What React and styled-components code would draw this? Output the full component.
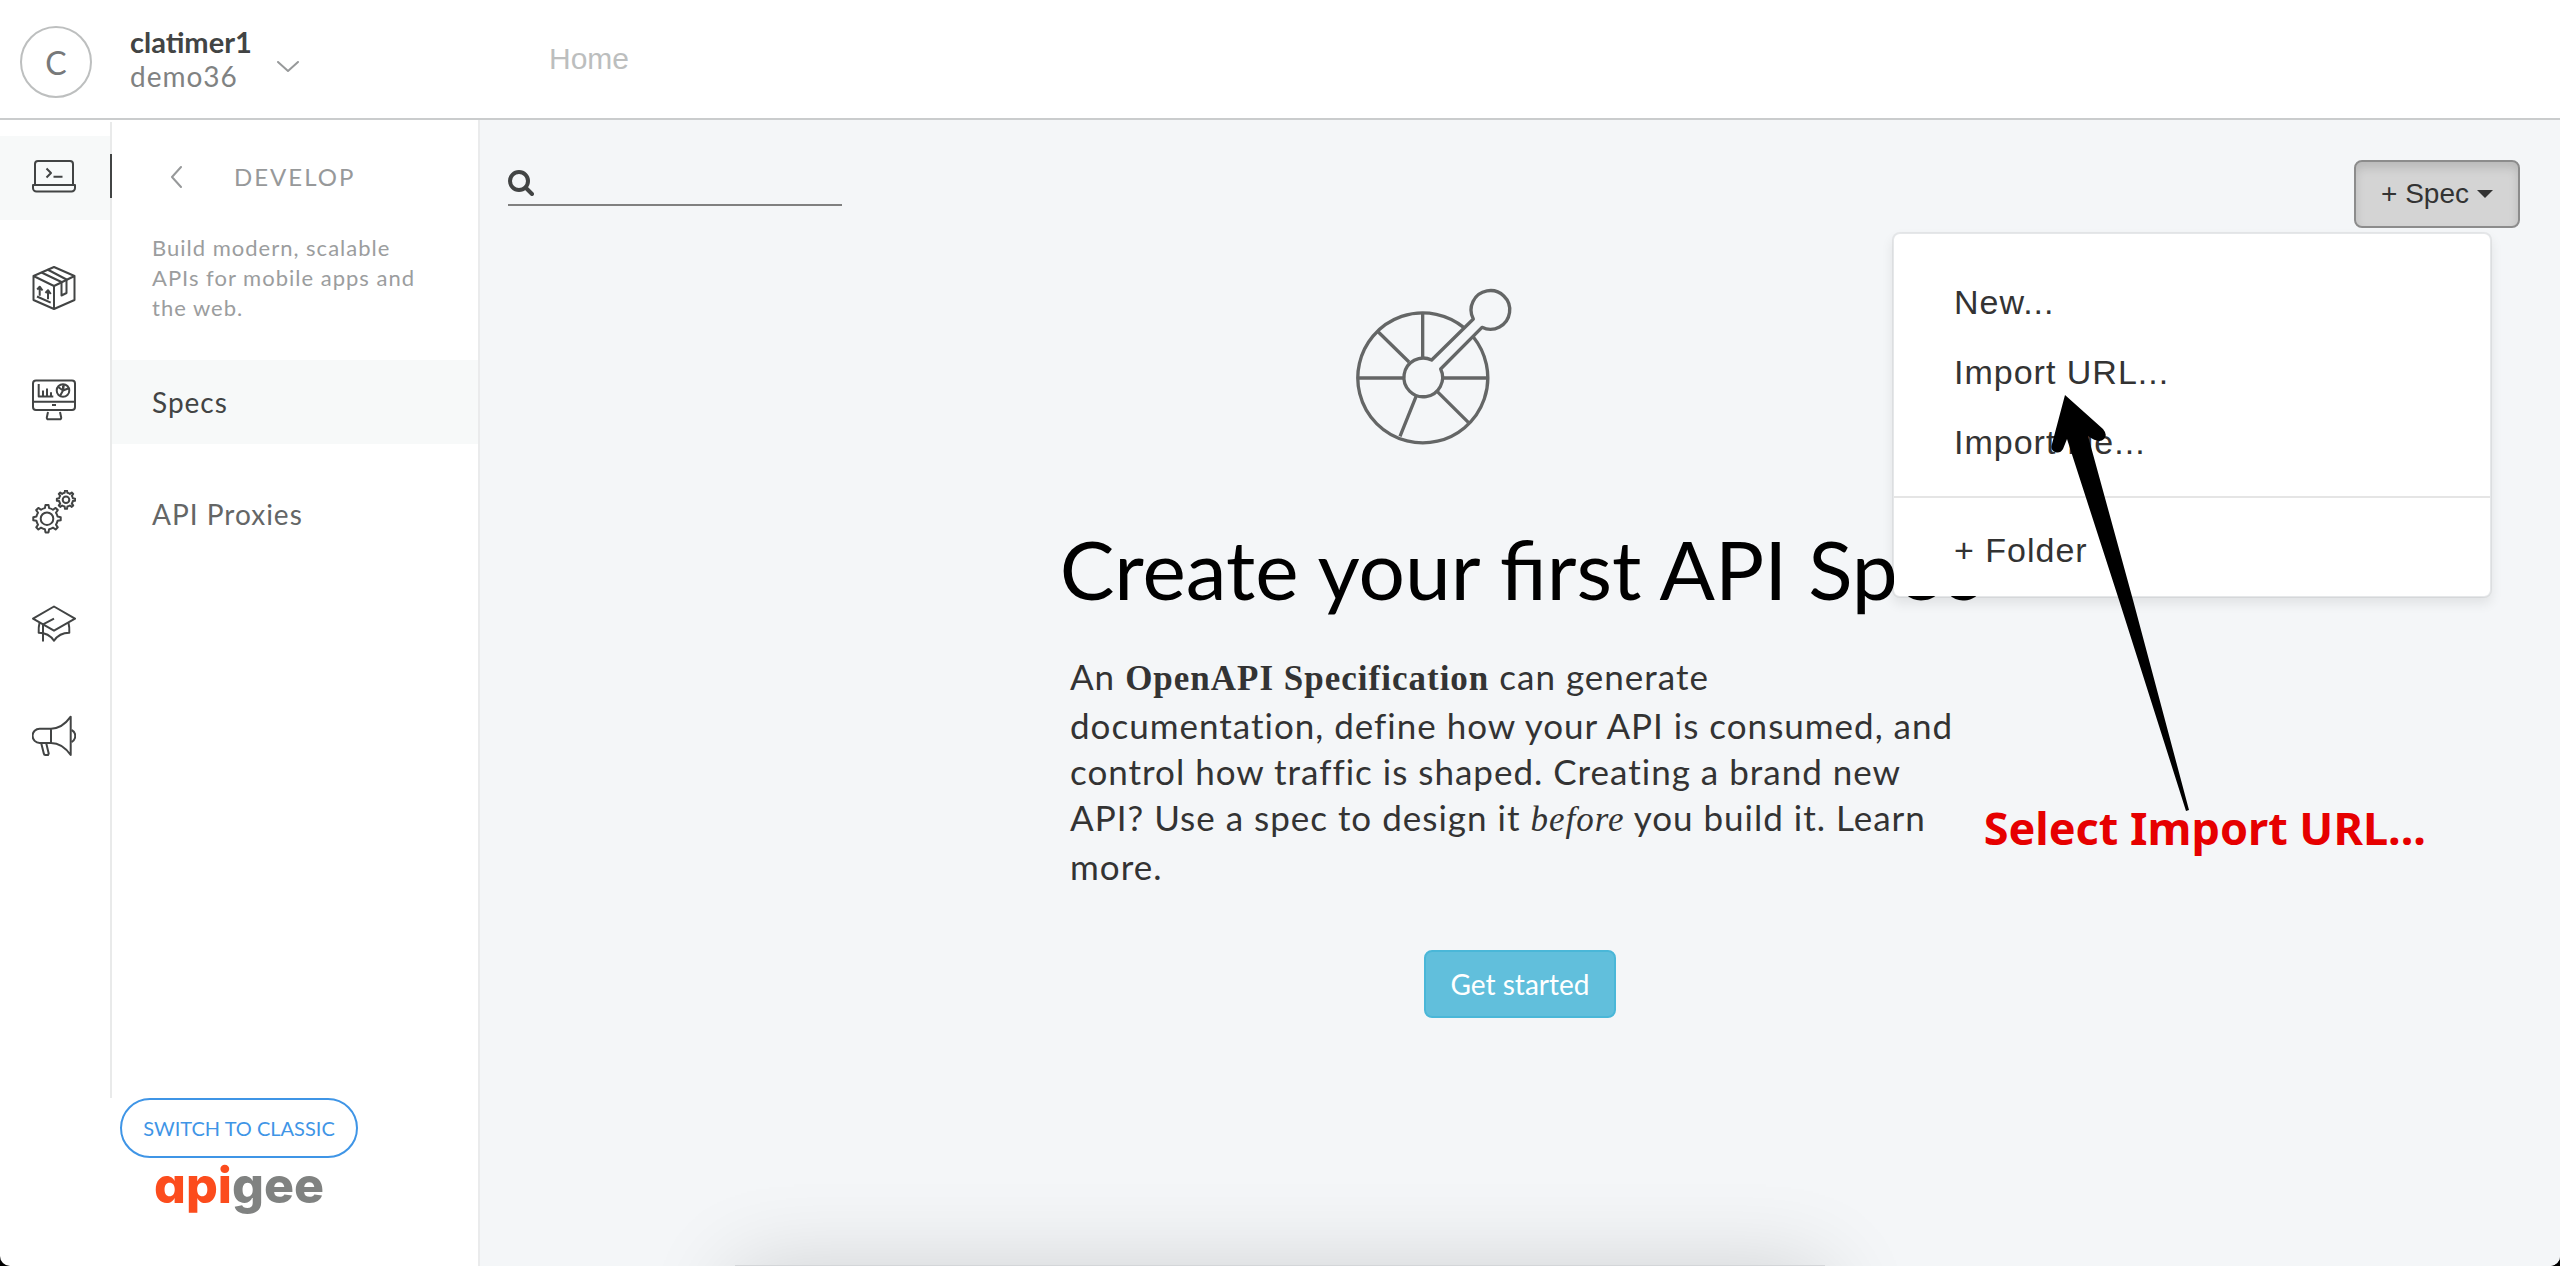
import React from "react";
import styled, { createGlobalStyle } from "styled-components";

const lato = '"Lato", "Open Sans", sans-serif';
const helvetica = '"Liberation Sans", Arial, sans-serif';
const times = '"Liberation Serif", "Times New Roman", serif';

const GlobalStyle = createGlobalStyle`
  *, *::before, *::after { box-sizing: border-box; }
  html, body { margin: 0; padding: 0; }
  body { background: #000; font-family: ${lato}; color: #333; }
  button, input { font: inherit; color: inherit; }
  h1, p, ul { margin: 0; padding: 0; }
  a { color: inherit; text-decoration: none; }
`;

const Page = styled.div`
  position: relative;
  display: flex;
  flex-direction: column;
  min-height: 100vh;
  background: #fff;
  border-radius: 0 0 10px 10px;
  overflow: hidden;
`;

const Header = styled.header`
  display: flex;
  align-items: center;
  height: 120px;
  border-bottom: 2px solid #cacccd;
`;

const Account = styled.button`
  display: flex;
  align-items: center;
  width: 480px;
  height: 100%;
  padding: 6px 20px 0;
  border: 0;
  background: none;
  text-align: left;
`;

const Avatar = styled.span`
  display: flex;
  align-items: center;
  justify-content: center;
  width: 72px;
  height: 72px;
  border: 2px solid #bdbfbf;
  border-radius: 50%;
  color: #77797a;
  font-size: 32px;
`;

const AccountNames = styled.span`
  display: flex;
  flex-direction: column;
  padding: 0 25px 6px 38px;
  font-size: 28px;
  line-height: 34px;
`;

const UserName = styled.strong`
  color: #424444;
  font-size: 29px;
  font-weight: 700;
`;

const OrgName = styled.span`
  color: #808282;
  letter-spacing: 1px;
`;

const Crumb = styled.a`
  padding-left: 69px;
  color: #bcbebe;
  font-family: ${helvetica};
  font-size: 30px;
`;

const Body = styled.div`
  display: flex;
  flex: 1;
`;

const Sidebar = styled.aside`
  display: flex;
  flex-direction: column;
  width: 480px;
  border-right: 2px solid #eaebec;
`;

const SidebarTop = styled.div`
  display: flex;
  flex: 1;
  padding-top: 2px;
`;

const Rail = styled.nav`
  display: flex;
  flex-direction: column;
  gap: 28px;
  width: 112px;
  padding-top: 14px;
  border-right: 2px solid #e9eaea;
`;

const RailLink = styled.a`
  position: relative;
  display: flex;
  justify-content: center;
  height: 84px;
  padding-top: 18px;
  padding-right: 2px;
  background: ${(p) => (p.$active ? "#f7f9f9" : "transparent")};

  &::after {
    content: "";
    display: ${(p) => (p.$active ? "block" : "none")};
    position: absolute;
    top: 18px;
    right: -2px;
    width: 2px;
    height: 44px;
    background: #424444;
  }
`;

const RailIcon = styled.svg`
  width: 44px;
  height: 44px;
  fill: none;
  stroke: #424444;
  stroke-width: 2;
  stroke-linejoin: round;
`;

const Panel = styled.section`
  flex: 1;
`;

const PanelHead = styled.div`
  display: flex;
  align-items: center;
  gap: 52px;
  padding: 37px 58px 0;
  color: #97999a;
  font-size: 24px;
  line-height: 36px;
  letter-spacing: 2px;
`;

const BackButton = styled.button`
  display: flex;
  padding: 0;
  border: 0;
  background: none;
`;

const Chevron = styled.svg`
  fill: none;
  stroke: #97999a;
  stroke-width: 2;
  stroke-linecap: round;
  stroke-linejoin: round;
`;

const AccountChevron = styled(Chevron)`
  margin-top: 10px;
`;

const PanelText = styled.p`
  padding: 38px 40px 37px;
  color: #9b9d9e;
  font-size: 22px;
  line-height: 30px;
  letter-spacing: 1px;
`;

const PanelList = styled.ul`
  display: flex;
  flex-direction: column;
  gap: 28px;
  list-style: none;
`;

const PanelLink = styled.a`
  display: flex;
  align-items: center;
  height: 84px;
  padding: 0 40px;
  background: ${(p) => (p.$active ? "#f7f9f9" : "transparent")};
  color: ${(p) => (p.$active ? "#424444" : "#646666")};
  font-size: 28px;
  letter-spacing: 1px;
`;

const SidebarFoot = styled.footer`
  display: flex;
  flex-direction: column;
  align-items: center;
  height: 168px;
`;

const SwitchButton = styled.button`
  height: 60px;
  padding: 0 21px;
  border: 2px solid #3f95e6;
  border-radius: 30px;
  background: #fff;
  color: #3f95e6;
  font-size: 20px;
`;

const Logo = styled.div`
  color: #808281;
  font-family: "Inter", sans-serif;
  font-feature-settings: "cv11";
  font-size: 50px;
  font-weight: 800;
  line-height: 54px;
`;

const LogoAccent = styled.span`
  color: #fc4c1d;
`;

const Main = styled.main`
  flex: 1;
  background: #f4f6f8;
`;

const Toolbar = styled.div`
  display: flex;
  align-items: flex-start;
  justify-content: space-between;
  padding: 40px 40px 0 28px;
`;

const Search = styled.label`
  display: flex;
  align-items: center;
  gap: 10px;
  width: 334px;
  height: 46px;
  padding-top: 2px;
  border-bottom: 2px solid #808080;
`;

const SearchInput = styled.input`
  flex: 1;
  min-width: 0;
  border: 0;
  outline: 0;
  background: none;
  font-size: 24px;
`;

const Dropdown = styled.div`
  position: relative;
`;

const SpecButton = styled.button`
  display: flex;
  align-items: center;
  gap: 8px;
  height: 68px;
  padding: 0 25px;
  border: 2px solid #8c8c8c;
  border-radius: 8px;
  background: #d4d4d4;
  box-shadow: inset 0 6px 10px rgba(0, 0, 0, 0.125);
  font-family: ${helvetica};
  font-size: 28px;
`;

const Menu = styled.div`
  position: absolute;
  z-index: 2;
  top: 72px;
  right: 28px;
  width: 600px;
  border: 2px solid rgba(0, 0, 0, 0.06);
  border-radius: 8px;
  background: #fff;
  background-clip: padding-box;
  box-shadow: 0 6px 12px rgba(0, 0, 0, 0.08);
`;

const MenuGroup = styled.div`
  display: flex;
  flex-direction: column;
  padding: ${(p) => (p.$last ? "17px 0 11px" : "33px 0 19px")};
  border-bottom: ${(p) => (p.$last ? "0" : "2px solid #e5e5e5")};
`;

const MenuItem = styled.button`
  height: 70px;
  padding: 0 60px;
  border: 0;
  background: none;
  font-family: ${helvetica};
  font-size: 34px;
  letter-spacing: 1px;
  text-align: left;
`;

const Empty = styled.section`
  display: flex;
  flex-direction: column;
  align-items: center;
  padding-top: 58px;
`;

const Wheel = styled.svg`
  width: 160px;
  height: 160px;
  margin-right: 172px;
  fill: none;
  stroke: #646666;
  stroke-width: 10;
  stroke-linejoin: round;
`;

const Title = styled.h1`
  padding-top: 74px;
  color: #000;
  font-size: 82px;
  font-weight: 400;
  line-height: 96px;
`;

const Lead = styled.p`
  width: 900px;
  padding: 37px 10px 0 0;
  font-size: 35px;
  line-height: 46px;
  letter-spacing: 1px;

  strong, em { font-family: ${times}; }
`;

const StartButton = styled.button`
  height: 68px;
  margin-top: 61px;
  padding: 0 25px;
  border: 2px solid #4ab7d8;
  border-radius: 8px;
  background: #61bfdc;
  color: #fff;
  font-size: 28px;
`;

const Callout = styled.div`
  position: absolute;
  z-index: 3;
  top: 394px;
  right: 134px;
  display: flex;
  flex-direction: column;
  pointer-events: none;
`;

const CalloutArrow = styled.svg`
  width: 140px;
  height: 418px;
  margin-left: 66px;
`;

const CalloutText = styled.span`
  height: 60px;
  margin-top: -14px;
  color: #e60000;
  font-family: "Noto Sans", sans-serif;
  font-size: 45px;
  font-weight: 700;
  line-height: 60px;
`;

const DockShadow = styled.div`
  position: absolute;
  z-index: 1;
  right: 0;
  bottom: 0;
  left: 0;
  height: 110px;
  overflow: hidden;
  pointer-events: none;

  &::after {
    content: "";
    display: block;
    width: 1090px;
    height: 300px;
    margin: 109px auto 0;
    background: #d4d6d9;
    box-shadow: 0 4px 84px rgba(0, 0, 0, 0.16);
  }
`;

const polar = (cx, cy, r, a) =>
  `${(cx + r * Math.cos(a)).toFixed(2)} ${(cy + r * Math.sin(a)).toFixed(2)}`;

function gearPath(cx, cy, outer, root, teeth = 8) {
  const step = (Math.PI * 2) / teeth;
  let d = "";
  for (let i = 0; i < teeth; i += 1) {
    const a = i * step;
    d += `${i ? "L" : "M"}${polar(cx, cy, root, a - step * 0.25)}`;
    d += `L${polar(cx, cy, outer, a - step * 0.14)}`;
    d += `L${polar(cx, cy, outer, a + step * 0.14)}`;
    d += `L${polar(cx, cy, root, a + step * 0.25)}`;
    d += `A${root} ${root} 0 0 1 ${polar(cx, cy, root, a + step * 0.75)}`;
  }
  return `${d}Z`;
}

const icons = {
  Develop: (
    <>
      <path d="M3 30V10a3 3 0 0 1 3-3h32a3 3 0 0 1 3 3v20" />
      <path d="M1 31h42v3a3.500 3.500 0 0 1-3.500 3.500h-35A3.500 3.500 0 0 1 1 34z" />
      <path d="M14.500 14.500l4.500 4.500-4.500 4.500M21.500 22.700h9" />
    </>
  ),
  Publish: (
    <>
      <path d="M22 1l20.500 9v24L22 43 1.500 34V10zM1.500 10L22 20l20.500-10M22 20v23" />
      <path d="M9.500 6.500l20 9.500v13.500l5-2.500V13.500l-19-10" />
      <path d="M7.700 29.700v-8.500M5.200 23.500l2.500-2.800 2.800 3.800M16 33.300v-8.500M13.500 27l2.500-2.800 2.800 3.800M5 30.500l13.700 6.200" />
    </>
  ),
  Analyze: (
    <>
      <rect x="1" y="2.500" width="42" height="29.500" rx="3" />
      <path d="M1 23.700h42M20 27h4M16 34l-1.200 5.500a1.500 1.500 0 0 0 1.500 1.800h11.400a1.500 1.500 0 0 0 1.500-1.800L28 34" />
      <path d="M6.700 6v12.500h14.600M11 18.500v-6M15 18.500v-8M19 18.500v-4.300" />
      <circle cx="31" cy="12.500" r="6.300" />
      <path d="M31 12.500l-4.800-3.500M31 12.500l1-6.300M31 12.500l5.800-2.300M31 12.500l-3 5.500M31 12.500v-5" />
    </>
  ),
  Admin: (
    <>
      <path d={gearPath(15, 28.7, 13.8, 10.8)} />
      <circle cx="15" cy="28.700" r="6.300" />
      <path d={gearPath(34, 9.7, 9.2, 7)} />
      <circle cx="34" cy="9.700" r="3.300" />
    </>
  ),
  Learn: (
    <>
      <path d="M22 4.500l21 12.200-21 12-21-12zM22 16.700l-11 5.600v17.200" />
      <path d="M7.500 21c-.8 3-1 6-.8 9.700 7 0 12 3 15.300 8 3.300-5 8.300-8 15.300-8 .2-3.700 0-6.700-.8-9.700" />
    </>
  ),
  Announcements: (
    <>
      <path d="M19 14.700H7.700a7 7 0 0 0 0 14.300H19zM19 14.700c8 0 14-4 19.700-12V41c-5.700-8-11.700-12-19.700-12" />
      <path d="M39.500 16c5 2.500 5 9.300 0 12M9.300 29.500l2.500 10a1.800 1.800 0 0 0 2 1.500h2.200l.7-1.500-2.400-10" />
    </>
  ),
};

export default function App() {
  return (
    <>
      <GlobalStyle />
      <Page>
        <Header>
          <Account type="button">
            <Avatar>C</Avatar>
            <AccountNames>
              <UserName>clatimer1</UserName>
              <OrgName>demo36</OrgName>
            </AccountNames>
            <AccountChevron width="22" height="12" viewBox="0 0 22 12" aria-hidden="true">
              <path d="M1 1l10 9L21 1" />
            </AccountChevron>
          </Account>
          <Crumb href="#home">Home</Crumb>
        </Header>

        <Body>
          <Sidebar>
            <SidebarTop>
              <Rail aria-label="Sections">
                {Object.entries(icons).map(([name, drawing], i) => (
                  <RailLink key={name} href={`#${name}`} aria-label={name} $active={i === 0}>
                    <RailIcon viewBox="0 0 44 44" aria-hidden="true">
                      {drawing}
                    </RailIcon>
                  </RailLink>
                ))}
              </Rail>
              <Panel>
                <PanelHead>
                  <BackButton type="button" aria-label="Back">
                    <Chevron width="12" height="22" viewBox="0 0 12 22" aria-hidden="true">
                      <path d="M11 1L2 11l9 10" />
                    </Chevron>
                  </BackButton>
                  <span>DEVELOP</span>
                </PanelHead>
                <PanelText>Build modern, scalable APIs for mobile apps and the web.</PanelText>
                <PanelList>
                  <li>
                    <PanelLink href="#specs" $active>Specs</PanelLink>
                  </li>
                  <li>
                    <PanelLink href="#proxies">API Proxies</PanelLink>
                  </li>
                </PanelList>
              </Panel>
            </SidebarTop>
            <SidebarFoot>
              <SwitchButton type="button">SWITCH TO CLASSIC</SwitchButton>
              <Logo>
                <LogoAccent>api</LogoAccent>gee
              </Logo>
            </SidebarFoot>
          </Sidebar>

          <Main>
            <Toolbar>
              <Search>
                <svg width="26" height="26" viewBox="0 0 26 26" fill="none" stroke="#424444" strokeWidth="4" strokeLinecap="round" aria-hidden="true">
                  <circle cx="11" cy="11" r="9" />
                  <path d="M18 18l6 6" />
                </svg>
                <SearchInput type="text" aria-label="Search specs" />
              </Search>
              <Dropdown>
                <SpecButton type="button" aria-haspopup="menu" aria-expanded="true">
                  + Spec
                  <svg width="16" height="8" viewBox="0 0 16 8" aria-hidden="true">
                    <path d="M0 0h16L8 8z" fill="#333" />
                  </svg>
                </SpecButton>
                <Menu role="menu">
                  <MenuGroup>
                    <MenuItem type="button" role="menuitem">New...</MenuItem>
                    <MenuItem type="button" role="menuitem">Import URL...</MenuItem>
                    <MenuItem type="button" role="menuitem">Import file...</MenuItem>
                  </MenuGroup>
                  <MenuGroup $last>
                    <MenuItem type="button" role="menuitem">+ Folder</MenuItem>
                  </MenuGroup>
                </Menu>
              </Dropdown>
            </Toolbar>

            <Empty>
              <Wheel viewBox="101 78 480 480" aria-hidden="true">
                <path d="M430 202A195 195 0 1 0 459 231" />
                <path d="M334 300A58 58 0 1 0 361 327L485 202A58 58 0 1 0 459 177Z" />
                <path d="M307 156V295M171 213l95 93M114 354h134M366 354h134M351 395l93 92M287 410l-48 119" />
              </Wheel>
              <Title>Create your first API Spec</Title>
              <Lead>
                An <strong>OpenAPI Specification</strong> can generate documentation, define how
                your API is consumed, and control how traffic is shaped. Creating a brand new API?
                Use a spec to design it <em>before</em> you build it. <a href="#learn">Learn more.</a>
              </Lead>
              <StartButton type="button">Get started</StartButton>
            </Empty>
          </Main>
        </Body>

        <Callout>
          <CalloutArrow viewBox="0 0 140 418" aria-hidden="true">
            <path d="M15 1L53 35Q58 41 54 45Q49 50 38 42L83 206L139 416L136 417L69 206L17 45L13 55Q10 60 5 58Q0 56 2 50Z" />
          </CalloutArrow>
          <CalloutText>Select Import URL...</CalloutText>
        </Callout>
        <DockShadow />
      </Page>
    </>
  );
}
